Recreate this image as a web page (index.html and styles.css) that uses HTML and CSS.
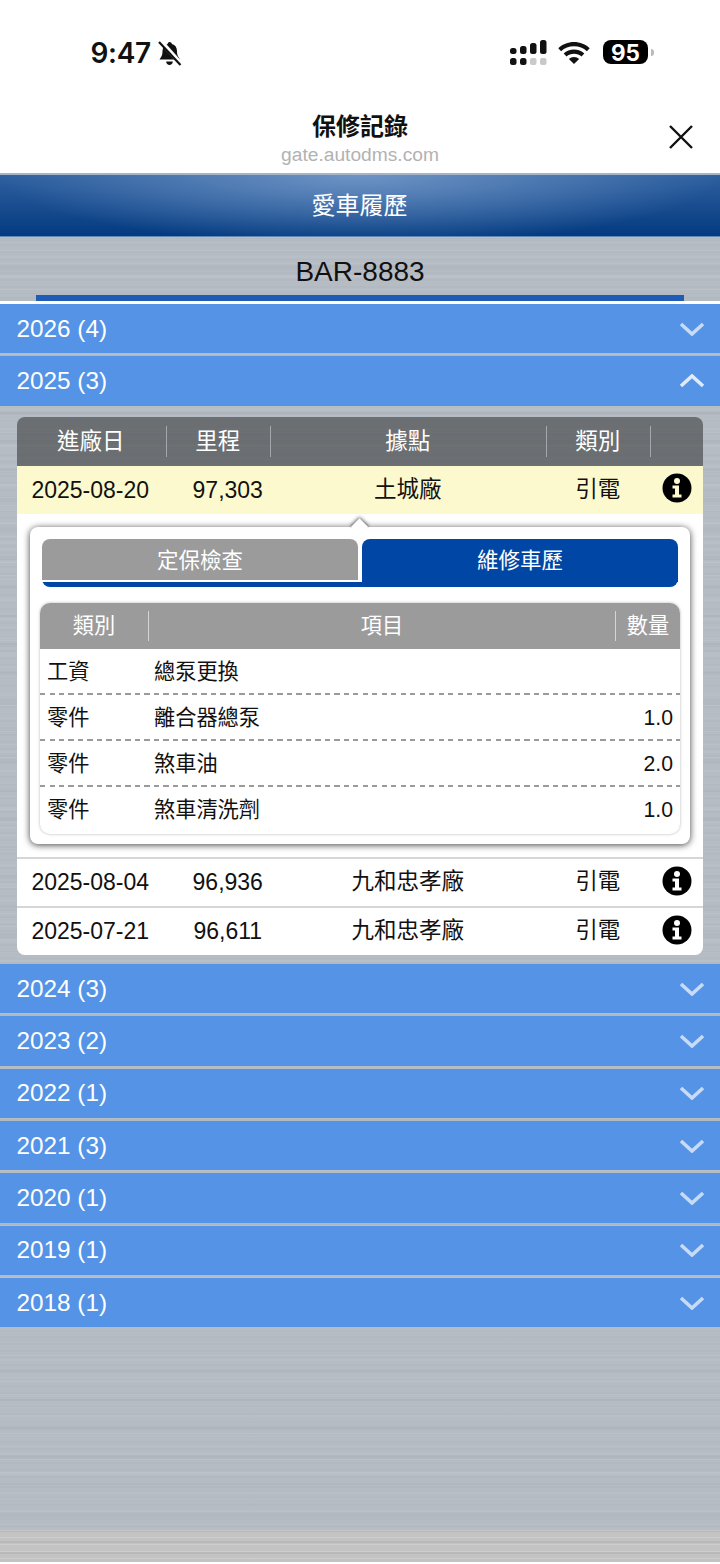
FILE: index.html
```html
<!DOCTYPE html>
<html lang="zh-Hant">
<head>
    <meta charset="UTF-8">
    <meta name="viewport" content="width=device-width, initial-scale=1.0">
    <title>保修記錄</title>
    <link rel="stylesheet" href="styles.css">
</head>
<body>
    <div class="status-bar">
        <div class="status-left">
            <span class="time">9:47</span>
            <svg class="bell" width="24" height="25" viewBox="0 0 24 25">
                <path d="M11.500 1c1.300 0 2.200.9 2.400 2 3.400.9 5.100 3.600 5.100 7.200 0 2.500.5 4.600 1.600 6.100l1.400 2.200H1.500l1.400-2.200C4 14.800 4.500 12.700 4.500 10.200c0-3.600 1.700-6.300 5.100-7.200.2-1.100 1.100-2 1.900-2zM8.200 20.500h6.600c0 2-1.500 3.500-3.300 3.500s-3.300-1.500-3.300-3.500z" fill="#111"/>
                <path d="M2.500 0 23 23" stroke="#fff" stroke-width="4.500"/>
                <path d="M1 1 22.500 24" stroke="#111" stroke-width="2.200"/>
            </svg>
        </div>
        <div class="status-right">
            <svg class="signal" width="37" height="26" viewBox="0 0 37 26">
                <rect x="0" y="8" width="6.500" height="6" rx="2.500" fill="#111"/>
                <rect x="10" y="6" width="6.500" height="8" rx="2.500" fill="#111"/>
                <rect x="20" y="3" width="6.500" height="11" rx="2.500" fill="#111"/>
                <rect x="30" y="0" width="6.500" height="14" rx="2.500" fill="#111"/>
                <rect x="0" y="18" width="6.500" height="7" rx="2.500" fill="#111"/>
                <rect x="10" y="18" width="6.500" height="7" rx="2.500" fill="#111"/>
                <rect x="20" y="18" width="6.500" height="7" rx="2" fill="#c9c9c9"/>
                <rect x="30" y="18" width="6.500" height="7" rx="2" fill="#c9c9c9"/>
            </svg>
            <svg class="wifi" width="32" height="22" viewBox="0 0 32 22">
                <path d="M16 0c6 0 11.600 2.300 15.700 6.200l-2.800 3C25.500 6 21 4.200 16 4.200S6.500 6 3.100 9.200L.3 6.200C4.400 2.300 10 0 16 0z" fill="#111"/>
                <path d="M16 7.500c4 0 7.600 1.500 10.300 4l-2.800 3C21.500 12.700 18.900 11.700 16 11.700s-5.500 1-7.500 2.800l-2.800-3c2.700-2.500 6.300-4 10.300-4z" fill="#111"/>
                <path d="M16 15c2 0 3.800.8 5.100 2L16 22l-5.100-5c1.300-1.200 3.100-2 5.100-2z" fill="#111"/>
            </svg>
            <div class="battery"><span>95</span></div>
            <div class="battery-nub"></div>
        </div>
    </div>

    <div class="toolbar">
        <div></div>
        <div class="toolbar-title">
            <h1>保修記錄</h1>
            <div class="toolbar-url">gate.autodms.com</div>
        </div>
        <svg class="close-icon" width="26" height="26" viewBox="0 0 26 26">
            <path d="M2 2 24 24M24 2 2 24" stroke="#111" stroke-width="2.400" fill="none"/>
        </svg>
    </div>

    <div class="page-head">愛車履歷</div>

    <div class="content">
        <div class="plate">
            <div class="plate-no">BAR-8883</div>
            <div class="plate-line"></div>
        </div>

        <div class="year"><span>2026 (4)</span><svg class="chevron" width="26" height="14" viewBox="0 0 26 14"><path d="M2 2 13 12 24 2" /></svg></div>

        <div class="year year-open"><span>2025 (3)</span><svg class="chevron chevron-up" width="26" height="14" viewBox="0 0 26 14"><path d="M2 12 13 2 24 12" /></svg></div>

        <div class="card">
            <div class="card-head card-cols">
                <div>進廠日</div>
                <div>里程</div>
                <div>據點</div>
                <div>類別</div>
                <div></div>
            </div>
            <div class="card-row card-cols active">
                <div>2025-08-20</div>
                <div class="km">97,303</div>
                <div class="place">土城廠</div>
                <div class="kind">引電</div>
                <div class="info-cell"><svg class="info" width="30" height="30" viewBox="0 0 30 30"><circle cx="15" cy="15" r="14.500" fill="#000"/><circle cx="15" cy="8" r="3" fill="#fdf9cf"/><path d="M10.500 12.500h6.500v9h2.500v3h-9v-3h2.500v-6h-2.500z" fill="#fdf9cf"/></svg></div>
            </div>

            <div class="detail">
                <div class="popup">
                    <div class="notch"></div>
                    <div class="tabs">
                        <div class="tab">定保檢查</div>
                        <div class="tab tab-on">維修車歷</div>
                    </div>
                    <div class="items">
                        <div class="items-head item-cols">
                            <div>類別</div>
                            <div>項目</div>
                            <div>數量</div>
                        </div>
                        <div class="item item-cols"><div>工資</div><div>總泵更換</div><div></div></div>
                        <div class="item item-cols"><div>零件</div><div>離合器總泵</div><div>1.0</div></div>
                        <div class="item item-cols"><div>零件</div><div>煞車油</div><div>2.0</div></div>
                        <div class="item item-cols"><div>零件</div><div>煞車清洗劑</div><div>1.0</div></div>
                    </div>
                </div>
            </div>

            <div class="card-row card-cols">
                <div>2025-08-04</div>
                <div class="km">96,936</div>
                <div class="place">九和忠孝廠</div>
                <div class="kind">引電</div>
                <div class="info-cell"><svg class="info" width="30" height="30" viewBox="0 0 30 30"><circle cx="15" cy="15" r="14.500" fill="#000"/><circle cx="15" cy="8" r="3" fill="#fff"/><path d="M10.500 12.500h6.500v9h2.500v3h-9v-3h2.500v-6h-2.500z" fill="#fff"/></svg></div>
            </div>
            <div class="card-row card-cols">
                <div>2025-07-21</div>
                <div class="km">96,611</div>
                <div class="place">九和忠孝廠</div>
                <div class="kind">引電</div>
                <div class="info-cell"><svg class="info" width="30" height="30" viewBox="0 0 30 30"><circle cx="15" cy="15" r="14.500" fill="#000"/><circle cx="15" cy="8" r="3" fill="#fff"/><path d="M10.500 12.500h6.500v9h2.500v3h-9v-3h2.500v-6h-2.500z" fill="#fff"/></svg></div>
            </div>
        </div>

        <div class="year"><span>2024 (3)</span><svg class="chevron" width="26" height="14" viewBox="0 0 26 14"><path d="M2 2 13 12 24 2" /></svg></div>
        <div class="year"><span>2023 (2)</span><svg class="chevron" width="26" height="14" viewBox="0 0 26 14"><path d="M2 2 13 12 24 2" /></svg></div>
        <div class="year"><span>2022 (1)</span><svg class="chevron" width="26" height="14" viewBox="0 0 26 14"><path d="M2 2 13 12 24 2" /></svg></div>
        <div class="year"><span>2021 (3)</span><svg class="chevron" width="26" height="14" viewBox="0 0 26 14"><path d="M2 2 13 12 24 2" /></svg></div>
        <div class="year"><span>2020 (1)</span><svg class="chevron" width="26" height="14" viewBox="0 0 26 14"><path d="M2 2 13 12 24 2" /></svg></div>
        <div class="year"><span>2019 (1)</span><svg class="chevron" width="26" height="14" viewBox="0 0 26 14"><path d="M2 2 13 12 24 2" /></svg></div>
        <div class="year"><span>2018 (1)</span><svg class="chevron" width="26" height="14" viewBox="0 0 26 14"><path d="M2 2 13 12 24 2" /></svg></div>

        <div class="filler"></div>
        <div class="footer-strip"></div>
    </div>
</body>
</html>
```

FILE: styles.css
```css
* {
    box-sizing: border-box;
}
html, body {
    margin: 0;
    padding: 0;
}
body {
    width: 720px;
    height: 1564px;
    display: flex;
    flex-direction: column;
    background-color: white;
    font-family: "Liberation Sans", "Noto Sans CJK TC", sans-serif;
    color: #111;
    overflow: hidden;
}
.status-bar {
    height: 100px;
    flex: none;
    display: flex;
    justify-content: space-between;
    padding: 40px 66px 0 90.500px;
}
.status-left {
    display: flex;
    align-items: flex-start;
    gap: 7px;
}
.time {
    font-family: Inter, sans-serif;
    font-weight: 600;
    font-size: 28px;
    line-height: 26px;
    letter-spacing: -0.3px;
}
.bell {
    margin-top: 1px;
}
.status-right {
    display: flex;
    align-items: flex-start;
}
.wifi {
    margin: 2px 13px 0 11px;
}
.battery {
    width: 45px;
    height: 24px;
    background-color: black;
    border-radius: 8px;
    color: white;
    font-family: Inter, sans-serif;
    font-weight: 700;
    font-size: 22.500px;
    line-height: 25px;
    text-align: center;
}
.battery-nub {
    width: 3px;
    height: 7px;
    margin: 9px 0 0 3px;
    background-color: #bbb;
    border-radius: 0 3px 3px 0;
}
.toolbar {
    height: 73px;
    flex: none;
    display: grid;
    grid-template-columns: 1fr auto 1fr;
}
.toolbar-title {
    text-align: center;
}
.toolbar-title h1 {
    margin: 12px -1px 0 -1px;
    font-size: 24px;
    line-height: 30px;
    font-weight: 700;
}
.toolbar-url {
    font-size: 19.200px;
    line-height: 24px;
    margin-top: 1px;
    color: #b2b2b2;
}
.close-icon {
    justify-self: end;
    margin: 24px 26px 0 0;
}
.page-head {
    height: 64px;
    flex: none;
    padding-right: 1px;
    border-top: 2px solid #a5b4c8;
    border-bottom: 1px solid #5f87b5;
    background: radial-gradient(ellipse 360px 70px at 50% 0, rgba(130,165,210,0.75), rgba(130,165,210,0) 100%), linear-gradient(#2f609f, #033a80);
    color: white;
    font-size: 24px;
    line-height: 62px;
    text-align: center;
}
.content {
    flex: 1;
    display: flex;
    flex-direction: column;
    background-color: #b5bcc4;
    background-image:
        repeating-linear-gradient(180deg, rgba(255,255,255,0.07) 0 1px, transparent 1px 13px),
        repeating-linear-gradient(180deg, rgba(0,0,0,0.015) 0 2px, transparent 2px 7px),
        repeating-linear-gradient(180deg, rgba(255,255,255,0.04) 0 3px, transparent 3px 19px),
        repeating-linear-gradient(180deg, rgba(0,0,0,0.02) 0 4px, transparent 4px 29px);
}
.plate {
    height: 67px;
    flex: none;
    border-bottom: 3px solid white;
}
.plate-no {
    height: 58px;
    padding: 18px 0 0;
    font-size: 28px;
    line-height: 34px;
    text-align: center;
}
.plate-line {
    height: 6px;
    margin: 0 36px;
    background-color: #1f5cb8;
}
.year {
    height: 49.330px;
    flex: none;
    margin-bottom: 3px;
    padding: 0 15px 0 16.500px;
    display: flex;
    align-items: center;
    justify-content: space-between;
    background-color: #5593e6;
    color: white;
    font-size: 24.300px;
}
.year-open {
    margin-bottom: 11px;
}
.chevron path {
    fill: none;
    stroke: #c8dbf6;
    stroke-width: 3.600;
}
.chevron-up path {
    stroke: #dfeafa;
}
.card {
    flex: none;
    margin: 0 17px 9.500px 16.500px;
    border-radius: 8px;
    overflow: hidden;
    font-size: 22.500px;
}
.card-cols {
    display: grid;
    grid-template-columns: 150.500px 103.500px 276.500px 103.500px 1fr;
    align-items: center;
    text-align: center;
}
.card-head {
    height: 49px;
    background-color: rgba(75,78,80,0.7);
    color: white;
}
.card-head div {
    height: 31px;
    padding-right: 1px;
    line-height: 31px;
    border-right: 1px solid #a5a8aa;
}
.card-head div:last-child {
    border-right: none;
}
.card-row {
    height: 49px;
    background-color: white;
    border-top: 2px solid #d6d6d6;
    line-height: 46px;
}
.card-row.active {
    height: 48px;
    border-top: none;
    background-color: #fdf9cf;
}
.km {
    padding-left: 18px;
    font-size: 23px;
}
.place, .kind {
    padding-right: 2px;
}
.card-row > div:first-child {
    padding-right: 3px;
    font-size: 23px;
}
.info-cell {
    display: flex;
    justify-content: flex-end;
    padding: 0 11px 3px 0;
}
.detail {
    height: 343px;
    padding: 13px 13px 0 13.500px;
    background-color: white;
}
.popup {
    position: relative;
    height: 317px;
    padding: 12px 10px 0;
    background-color: white;
    border-radius: 8px;
    box-shadow: 0 1px 7px rgba(0,0,0,0.75);
}
.notch {
    position: absolute;
    top: -6px;
    left: 323px;
    width: 13px;
    height: 13px;
    background-color: white;
    transform: rotate(45deg);
    box-shadow: -1px -1px 4px rgba(0,0,0,0.6);
    clip-path: polygon(-60% -60%, 100% -60%, 100% 0, 0 100%, -60% 100%);
}
.tabs {
    display: grid;
    grid-template-columns: 316px 316px;
    gap: 4px;
    height: 48px;
    margin: 0 2px;
    border-bottom: 5px solid #0047a5;
    border-radius: 0 0 8px 8px;
    font-size: 21.500px;
    color: white;
    text-align: center;
}
.tab {
    height: 43px;
    line-height: 44px;
    background-color: #9b9b9b;
    background-clip: padding-box;
    border-bottom: 2px solid white;
    border-radius: 8px 8px 0 0;
}
.tab-on {
    background-color: #0047a5;
    border-bottom: none;
}
.items {
    height: 231px;
    margin-top: 16px;
    border-radius: 10px;
    overflow: hidden;
    background-color: white;
    box-shadow: 0 0 3px rgba(0,0,0,0.3);
    font-size: 21.200px;
}
.item-cols {
    display: grid;
    grid-template-columns: 108px 468px 64px;
    align-items: center;
}
.items-head {
    height: 46px;
    background-color: #9b9b9b;
    color: white;
    text-align: center;
}
.items-head div {
    height: 30px;
    line-height: 30px;
}
.items-head div:nth-child(2) {
    border-left: 1px solid #d5d5d5;
    border-right: 1px solid #d5d5d5;
}
.item {
    height: 46px;
    background-image: repeating-linear-gradient(90deg, #9a9a9a 0 5px, transparent 5px 9.500px);
    background-size: 100% 2px;
    background-position: bottom;
    background-repeat: no-repeat;
    line-height: 44px;
}
.item:last-child {
    background-image: none;
}
.item div:first-child {
    padding-left: 7px;
}
.item div:nth-child(2) {
    padding-left: 6px;
}
.item div:last-child {
    padding-right: 7px;
    text-align: right;
}
.filler {
    flex: 1;
}
.footer-strip {
    height: 34px;
    flex: none;
    border-bottom: 2px solid white;
    background-color: #c3c3c3;
    background-image:
        repeating-linear-gradient(180deg, rgba(255,255,255,0.18) 0 1px, transparent 1px 7px),
        repeating-linear-gradient(180deg, rgba(0,0,0,0.05) 0 2px, transparent 2px 11px);
}
```
